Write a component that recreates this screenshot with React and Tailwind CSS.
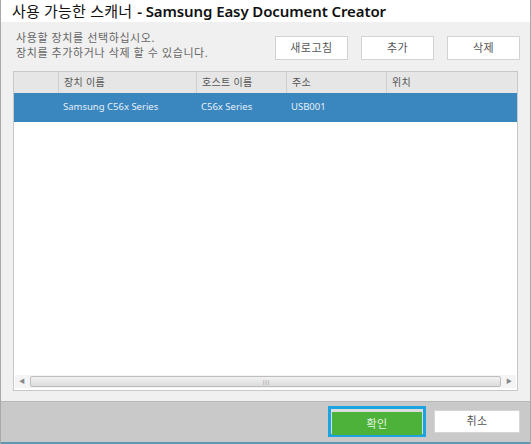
import React from 'react';

const cols = [
  { label: '', w: 'w-[44px]' },
  { label: '장치 이름', w: 'w-[138px]' },
  { label: '호스트 이름', w: 'w-[90px]' },
  { label: '주소', w: 'w-[100px]' },
  { label: '위치', w: 'flex-1' },
];

const row = ['', 'Samsung C56x Series', 'C56x Series', 'USB001', ''];

const font = { fontFamily: '"Noto Sans", "Noto Sans CJK KR", sans-serif' };

export default function App() {
  return (
    <div className="w-[531px] h-[444px] flex flex-col border-x border-[#a9a9a9] bg-[#f0f0f0] overflow-hidden" style={font}>
      {/* title */}
      <div className="h-[22px] bg-white flex items-center pl-[11px] text-[15px] leading-none text-[#111]">
        <span className="tracking-[0.2px]">사용 가능한 스캐너</span>
        <span className="font-semibold ml-[5px] tracking-[-0.1px]">- Samsung Easy Document Creator</span>
      </div>

      {/* top area */}
      <div className="flex items-start pt-[8px] pl-[15px] pr-[10px]">
        <div className="flex-1 text-[11px] leading-[15px] text-[#666] tracking-[0.6px]">
          <p>사용할 장치를 선택하십시오.</p>
          <p>장치를 추가하거나 삭제 할 수 있습니다.</p>
        </div>
        <div className="flex gap-[13px] pt-[6px]">
          {['새로고침', '추가', '삭제'].map((t) => (
            <button key={t} className="w-[73px] h-[24px] bg-white border border-[#d2d2d2] text-[11px] text-[#555] tracking-[0.5px]">
              {t}
            </button>
          ))}
        </div>
      </div>

      {/* table */}
      <div className="mx-[12px] mt-[11px] h-[320px] bg-white border border-[#c8c8c8] flex flex-col">
        <div className="flex h-[21px] bg-[#e6e6e6] text-[10px] text-[#555] items-stretch tracking-[0.3px]">
          {cols.map((c, i) => (
            <div key={i} className={`${c.w} flex items-center pl-[5px] ${i > 0 ? 'border-l border-[#d0d0d0]' : ''}`}>
              {c.label}
            </div>
          ))}
        </div>
        <div className="flex h-[29px] bg-[#3a86bf] text-[9.5px] text-[#e8f0f8]">
          {row.map((v, i) => (
            <div key={i} className={`${cols[i].w} flex items-center pl-[5px]`}>
              {v}
            </div>
          ))}
        </div>
        <div className="flex-1" />
        {/* horizontal scrollbar */}
        <div className="h-[13px] mx-[1px] mb-[2px] flex items-center bg-[#f4f4f4] gap-[4px] px-[3px]">
          <span className="text-[6px] text-[#888] w-[8px] text-center">◀</span>
          <div className="flex-1 h-[11px] rounded-[2px] border border-[#bdbdbd] bg-gradient-to-b from-[#f2f2f2] to-[#dcdcdc] flex items-center justify-center">
            <span className="text-[6px] text-[#888] leading-none tracking-[-1px]">|||</span>
          </div>
          <span className="text-[6px] text-[#888] w-[8px] text-center">▶</span>
        </div>
      </div>

      <div className="flex-1" />

      {/* footer */}
      <div className="h-[41px] bg-[#c9c9c9] border-t border-[#b8b8b8] flex items-center justify-end gap-[8px] pr-[10px] pb-[2px]">
        <div className="w-[98px] h-[31px] border-[3px] border-[#1ba3e2] p-[1px] bg-[#dcdcdc]">
          <button className="w-full h-full bg-[#4db23a] text-[11px] text-[#e8f5e0] tracking-[0.5px]">확인</button>
        </div>
        <button className="w-[86px] h-[23px] bg-white border border-[#d6d6d6] text-[11px] text-[#555] tracking-[0.5px]">취소</button>
      </div>
      <div className="h-[2px] bg-[#5f97b0]" />
    </div>
  );
}
